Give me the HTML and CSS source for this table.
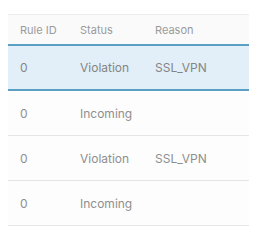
FILE: index.html
```html
<!DOCTYPE html>
<html lang="en">
<head>
    <meta charset="UTF-8">
    <link rel="stylesheet" href="styles.css">
</head>
<body>
    <div class="grid">
        <div class="row head">
            <div>Rule ID</div>
            <div>Status</div>
            <div>Reason</div>
        </div>
        <div class="row selected">
            <div>0</div>
            <div>Violation</div>
            <div>SSL_VPN</div>
        </div>
        <div class="row">
            <div>0</div>
            <div>Incoming</div>
            <div></div>
        </div>
        <div class="row">
            <div>0</div>
            <div>Violation</div>
            <div>SSL_VPN</div>
        </div>
        <div class="row">
            <div>0</div>
            <div>Incoming</div>
            <div></div>
        </div>
    </div>
</body>
</html>
```

FILE: styles.css
```css
*{
    padding: 0;
    margin: 0;
    box-sizing: border-box;
}
body{
    background: #fff;
    font-family: Inter, "Open Sans", sans-serif;
    font-size: 12px;
    color: #8f8f8f;
}
.grid{
    margin: 14px 0 0 8px;
    width: 241px;
    border-top: 1px solid #ececec;
}
.row{
    display: grid;
    grid-template-columns: 60px 75px 1fr;
    align-items: center;
    height: 45px;
    padding-left: 12px;
    border-bottom: 1px solid #e6e6e6;
    background: #fdfdfd;
}
.head{
    height: 31px;
    background: #fafafa;
    border-bottom: 2px solid #5aa0c4;
    font-size: 11px;
    color: #9a9a9a;
}
.selected{
    background: #e2eff8;
    border-bottom: 2px solid #5aa0c4;
    color: #858585;
}
```
